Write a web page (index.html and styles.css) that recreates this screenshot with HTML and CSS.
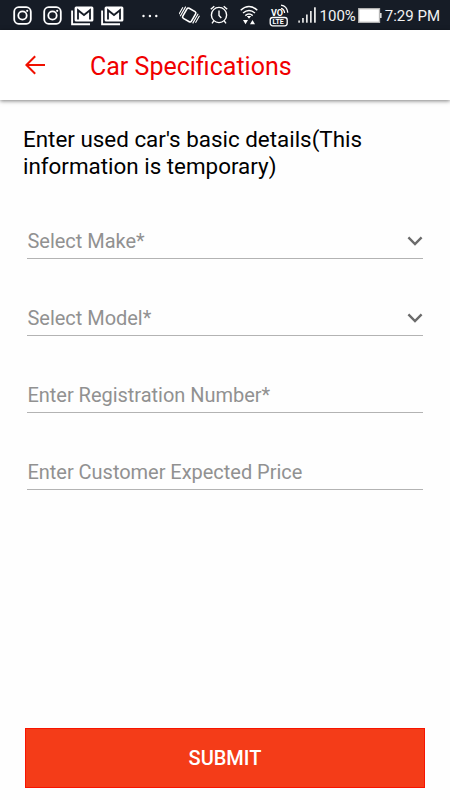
FILE: index.html
```html
<!DOCTYPE html>
<html lang="en">
<head>
    <meta charset="UTF-8">
    <meta name="viewport" content="width=device-width, initial-scale=1.0">
    <title>Car Specifications</title>
    <link rel="stylesheet" href="styles.css">
</head>
<body>
    <svg class="defs" width="0" height="0">
        <symbol id="camera" viewBox="0 0 20 20">
            <rect x="1.2" y="1.2" width="16.6" height="16.6" rx="4.5" fill="none" stroke="#fff" stroke-width="1.8"/>
            <circle cx="9.5" cy="9.5" r="4.2" fill="none" stroke="#fff" stroke-width="1.8"/>
            <circle cx="14.2" cy="4.8" r="1.1" fill="#fff"/>
        </symbol>
        <symbol id="mail" viewBox="0 0 23 20">
            <path d="M1.1 4.5V18.2H19" fill="none" stroke="#fff" stroke-width="1.9"/>
            <rect x="3.6" y="0.6" width="18.8" height="15" rx="1.5" fill="#fff"/>
            <path d="M7 13.6V4.2L13 9L19 4.2V13.6" fill="none" stroke="#161c26" stroke-width="1.8"/>
        </symbol>
        <symbol id="chevron" viewBox="0 0 16 10">
            <path d="M1.4 1.4L8 8L14.6 1.4" fill="none" stroke="#6b6b6b" stroke-width="2.4"/>
        </symbol>
    </svg>
    <main class="screen">
        <div class="status-bar">
            <div class="notifications">
                <svg width="20" height="20"><use href="#camera"/></svg>
                <svg width="20" height="20"><use href="#camera"/></svg>
                <svg class="mail" width="23" height="20"><use href="#mail"/></svg>
                <svg class="mail" width="23" height="20"><use href="#mail"/></svg>
                <svg class="dots" width="16" height="4" viewBox="0 0 16 4" fill="#fff">
                    <circle cx="1.5" cy="2" r="1.2"/>
                    <circle cx="7.9" cy="2" r="1.2"/>
                    <circle cx="14.3" cy="2" r="1.2"/>
                </svg>
            </div>
            <div class="system">
                <svg class="vibrate" width="21" height="20" viewBox="0 0 21 20" fill="none" stroke="#fff">
                    <g transform="rotate(30 10.2 10)">
                        <rect x="5.2" y="4.2" width="10" height="11.6" rx="1.6" stroke-width="1.6"/>
                        <path d="M3 4.5V15.5M17.4 4.5V15.5M0.9 6.5V14.5M19.5 5.5V13.5" stroke-width="1.1"/>
                    </g>
                </svg>
                <svg class="alarm" width="18" height="20" viewBox="0 0 18 20" fill="none" stroke="#fff" stroke-width="1.4">
                    <circle cx="9" cy="10" r="7.6"/>
                    <path d="M9 5.5V10.5L11.3 13M0.8 4.3L4.3 1.2M17.2 4.3L13.7 1.2M3.8 15.8L2 18.3M14.2 15.8L16 18.3"/>
                </svg>
                <svg class="wifi" width="18" height="20" viewBox="0 0 18 20" fill="none" stroke="#fff" stroke-width="1.4">
                    <path d="M0.7 5.2Q9 -2 17.3 5.2M3 8Q9 3 15 8M5.3 10.6Q9 7.4 12.7 10.6"/>
                    <path d="M6.8 11H11.2L9 13.7ZM3 15H8L5.5 19.2ZM10 19.2H15L12.5 15Z" fill="#fff" stroke="none"/>
                </svg>
                <svg class="volte" width="21" height="23" viewBox="0 0 21 23" fill="none" stroke="#fff" stroke-width="1.3">
                    <text x="2" y="12" class="volte-top">VO</text>
                    <path d="M12 4.4Q15.2 5 15.6 9M12 1.2Q18 2 18.8 8.6"/>
                    <rect x="1.2" y="13.5" width="17" height="8.3" rx="2.5" stroke-width="1.3"/>
                    <text x="3.5" y="20.3" class="volte-bottom">LTE</text>
                </svg>
                <svg class="signal" width="19" height="16" viewBox="0 0 19 16" fill="#e6e6e6">
                    <rect x="0.3" y="13.5" width="1.6" height="2.2"/>
                    <rect x="4.1" y="11" width="1.7" height="4.7"/>
                    <rect x="8" y="7.5" width="1.7" height="8.2"/>
                    <rect x="12" y="4" width="1.7" height="11.7"/>
                    <rect x="16" y="0.3" width="1.8" height="15.4"/>
                </svg>
                <span class="percent">100%</span>
                <svg class="battery" width="24" height="15" viewBox="0 0 24 15">
                    <rect x="0.7" y="0.7" width="20.8" height="13.6" fill="#fff" stroke="#b5b5b5" stroke-width="1.3"/>
                    <rect x="22" y="5" width="1.6" height="5" fill="#ddd"/>
                </svg>
                <span class="time">7:29 PM</span>
            </div>
        </div>
        <header class="app-bar">
            <svg class="back" width="20" height="20" viewBox="0 0 20 20" fill="none" stroke="#f01000" stroke-width="2">
                <path d="M20 10H1.6M10.2 1.2L1.4 10L10.2 18.8"/>
            </svg>
            <h1>Car Specifications</h1>
        </header>
        <form class="details">
            <p class="intro">Enter used car's basic details(This information is temporary)</p>
            <div class="field">
                <span>Select Make*</span>
                <svg width="16" height="10"><use href="#chevron"/></svg>
            </div>
            <div class="field">
                <span>Select Model*</span>
                <svg width="16" height="10"><use href="#chevron"/></svg>
            </div>
            <div class="field">
                <span>Enter Registration Number*</span>
            </div>
            <div class="field">
                <span>Enter Customer Expected Price</span>
            </div>
            <button type="button" class="submit">SUBMIT</button>
        </form>
    </main>
</body>
</html>
```
FILE: styles.css
```css
*,*::before,*::after
{
    box-sizing: border-box;
}
body
{
    margin: 0;
    font-family: Roboto, sans-serif;
    background-color: #fefefe;
}
.defs
{
    display: none;
}
.screen
{
    display: flex;
    flex-direction: column;
    height: 100vh;
    overflow: hidden;
}
.status-bar
{
    display: flex;
    flex: 0 0 30px;
    justify-content: space-between;
    padding: 0 10px 0 13px;
    background-color: #161c26;
    color: #f2f2f2;
    font-size: 15px;
}
.status-bar svg
{
    flex: none;
}
.notifications, .system
{
    display: flex;
    align-items: center;
}
.notifications
{
    gap: 10px;
    padding-top: 1px;
}
.notifications .mail
{
    margin-left: -2px;
}
.notifications .mail+.mail
{
    margin-left: -3px;
}
.notifications .dots
{
    margin-left: 8px;
}
.alarm
{
    margin-left: 10px;
}
.wifi
{
    margin-left: 12px;
}
.volte
{
    margin-left: 11px;
}
.volte-top, .volte-bottom
{
    fill: #fff;
    stroke: none;
    font-weight: 700;
}
.volte-top
{
    font-size: 9px;
}
.volte-bottom
{
    font-size: 7px;
}
.signal
{
    margin-left: 8px;
}
.percent
{
    margin: 2px 2px 0 3px;
}
.time
{
    margin: 2px 0 0 3px;
}
.app-bar
{
    display: flex;
    flex: 0 0 70px;
    align-items: center;
    padding: 0 25px;
    background-color: #fff;
    box-shadow: 0 1px 4px rgba(0, 0, 0, 0.5);
}
.app-bar h1
{
    margin: 2px 0 0 45px;
    font-size: 25px;
    font-weight: 400;
    color: #f00000;
}
.details
{
    display: flex;
    flex: 1;
    flex-direction: column;
    padding: 26px 25px 12px;
}
.intro
{
    margin: 0 0 28px -2px;
    font-size: 22.4px;
    line-height: 26.5px;
    color: #000;
}
.field
{
    display: flex;
    height: 52px;
    margin: 0 2px 25px;
    padding: 0 0 5px 0.5px;
    align-items: flex-end;
    justify-content: space-between;
    border-bottom: 1px solid #b3b3b3;
    font-size: 20px;
    line-height: 24px;
    letter-spacing: -0.03px;
    color: #919191;
}
.field svg
{
    margin-bottom: 7px;
}
.submit
{
    height: 60px;
    margin-top: auto;
    border: 1px solid #f81400;
    background-color: #f43c18;
    color: #fff;
    font-family: inherit;
    font-size: 20px;
    font-weight: 500;
}
```
